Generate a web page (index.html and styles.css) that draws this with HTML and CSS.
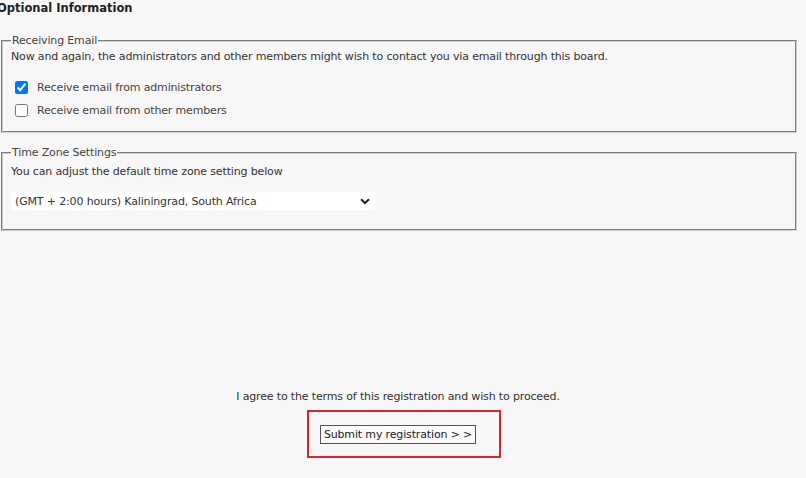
FILE: index.html
```html
<!DOCTYPE html>
<html>
<head>
<meta charset="utf-8">
<link rel="stylesheet" href="styles.css">
</head>
<body>
<div class="page">
  <h3 class="section-title">Optional Information</h3>
  <fieldset class="group group-email">
    <legend>Receiving Email</legend>
    <p class="desc">Now and again, the administrators and other members might wish to contact you via email through this board.</p>
    <label class="check"><input type="checkbox" checked><span>Receive email from administrators</span></label>
    <label class="check"><input type="checkbox"><span>Receive email from other members</span></label>
  </fieldset>
  <fieldset class="group group-tz">
    <legend>Time Zone Settings</legend>
    <p class="desc desc-tz">You can adjust the default time zone setting below</p>
    <div class="select">
      <span>(GMT + 2:00 hours) Kaliningrad, South Africa</span>
      <svg class="chev" width="10" height="7" viewBox="0 0 10 7"><path d="M1 1.2 L5 5 L9 1.2" fill="none" stroke="#222" stroke-width="2"/></svg>
    </div>
  </fieldset>
  <div class="agree">
    <p>I agree to the terms of this registration and wish to proceed.</p>
    <div class="highlight">
      <button class="submit">Submit my registration &gt; &gt;</button>
    </div>
  </div>
</div>
</body>
</html>
```

FILE: styles.css
```css
html, body {
  margin: 0;
  padding: 0;
  background: #f7f7f7;
}
body {
  font-family: "DejaVu Sans", Verdana, sans-serif;
  font-size: 11px;
  letter-spacing: -0.15px;
  color: #333;
}
.page {
  width: 806px;
  height: 478px;
  position: relative;
  overflow: hidden;
}
.section-title {
  margin: 0;
  padding: 1px 0 0 0;
  margin-left: -3px;
  font-size: 11.5px;
  font-weight: bold;
  letter-spacing: 0;
  color: #222;
  height: 18px;
  line-height: 14px;
}
.group {
  margin: 10px 0 0 1px;
  width: 796px;
  box-sizing: border-box;
  border: 2px groove #d0d0d0;
  padding: 0 8px 0 8px;
}
.group legend {
  padding: 0 1px;
  margin-left: 0;
  color: #444;
  font-size: 11px;
  line-height: 13px;
}
.group-email {
  height: 99px;
  margin-top: 15px;
}
.group-tz {
  height: 85px;
  margin-top: 13px;
}
.desc {
  margin: 3px 0 0 0;
  line-height: 14px;
  color: #333;
}
.desc-tz {
  margin-top: 6px;
}
.check {
  display: flex;
  align-items: center;
  height: 23px;
  margin-left: 4px;
  color: #444;
}
.group-email .check:first-of-type {
  margin-top: 12px;
}
.check input {
  margin: 0 9px 0 0;
  width: 13px;
  height: 13px;
}
.select {
  margin-top: 13px;
  width: 364px;
  height: 18px;
  background: #fff;
  display: flex;
  align-items: center;
  justify-content: space-between;
  padding: 0 4px 0 4px;
  box-sizing: border-box;
  color: #333;
}
.chev {
  margin-right: 1px;
}
.agree {
  display: flex;
  flex-direction: column;
  align-items: center;
  margin-top: 159px;
  padding-right: 10px;
}
.agree p {
  margin: 0;
  line-height: 14px;
  color: #333;
}
.highlight {
  margin-top: 6px;
  margin-left: 12px;
  width: 194px;
  height: 48px;
  box-sizing: border-box;
  border: 2px solid #d9262b;
  padding-right: 12px;
  display: flex;
  align-items: center;
  justify-content: center;
}
.submit {
  font-family: "DejaVu Sans", Verdana, sans-serif;
  font-size: 11px;
  letter-spacing: -0.15px;
  color: #222;
  background: #fbfbfb;
  border: 1px solid #555;
  padding: 0 3px;
  height: 19px;
  margin: 0;
}
```
